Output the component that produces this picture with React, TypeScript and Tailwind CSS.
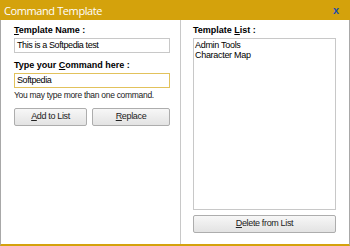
import React from "react";

const font = { fontFamily: "'Liberation Sans', Arial, sans-serif" };

function U({ c }: { c: string }) {
  return <span className="underline underline-offset-[1px]">{c}</span>;
}

function Btn({ children, className = "" }: { children: React.ReactNode; className?: string }) {
  return (
    <div
      className={`h-[18px] flex items-center justify-center rounded-[2px] border border-[#adadad] bg-gradient-to-b from-[#f7f7f7] to-[#e3e3e3] text-[9px] tracking-[-0.35px] text-[#222] whitespace-nowrap ${className}`}
    >
      {children}
    </div>
  );
}

export default function App() {
  return (
    <div className="w-[350px] h-[246px] flex flex-col bg-white overflow-hidden" style={font}>
      <div className="h-[20px] bg-[#d4a20c] flex items-center justify-between pl-[4px] pr-[11px]">
        <span className="text-white text-[11px] tracking-[-0.4px] leading-none" style={{ fontFamily: "'Open Sans', 'Liberation Sans', sans-serif" }}>
          Command Template
        </span>
        <span className="text-[#1d4fa8] text-[11px] font-bold leading-none">x</span>
      </div>
      <div className="flex-1 flex border-l border-l-[#a8a8a8] border-r border-r-[#a8a8a8] border-b-2 border-b-[#d4a20c]">
        <div className="w-[180px] border-r border-r-[#c8c8c8] pl-[13px] flex flex-col">
          <div className="mt-[5px] h-[11px] text-[9px] leading-[11px] font-bold text-black whitespace-nowrap">
            <U c="T" />emplate Name :
          </div>
          <div className="mt-[2px] h-[15px] w-[156px] border border-[#c8c8c8] flex items-center pl-[2px] text-[9px] tracking-[-0.4px] text-black whitespace-nowrap">
            This is a Softpedia test
          </div>
          <div className="mt-[7px] h-[11px] text-[9px] leading-[11px] font-bold text-black whitespace-nowrap">
            Type your <U c="C" />ommand here :
          </div>
          <div className="mt-[2px] h-[15px] w-[156px] border border-[#e2c25c] flex items-center pl-[2px] text-[9px] tracking-[-0.4px] text-black whitespace-nowrap">
            Softpedia
          </div>
          <div className="mt-[2px] h-[11px] text-[8.5px] tracking-[-0.3px] leading-[11px] text-[#222] whitespace-nowrap">
            You may type more than one command.
          </div>
          <div className="mt-[7px] flex gap-[5px]">
            <Btn className="w-[73px]">
              <U c="A" />dd to List
            </Btn>
            <Btn className="w-[78px]">
              <U c="R" />eplace
            </Btn>
          </div>
        </div>
        <div className="flex-1 pl-[12px] flex flex-col">
          <div className="mt-[5px] h-[11px] text-[9px] leading-[11px] font-bold text-black whitespace-nowrap">
            Template <U c="L" />ist :
          </div>
          <div className="mt-[2px] h-[172px] w-[143px] border border-[#c8c8c8] pl-[1px] pt-[1px] text-[9px] tracking-[-0.3px] leading-[10px] text-black">
            <div>Admin Tools</div>
            <div>Character Map</div>
          </div>
          <Btn className="mt-[5px] w-[143px]">
            <U c="D" />elete from List
          </Btn>
        </div>
      </div>
    </div>
  );
}
